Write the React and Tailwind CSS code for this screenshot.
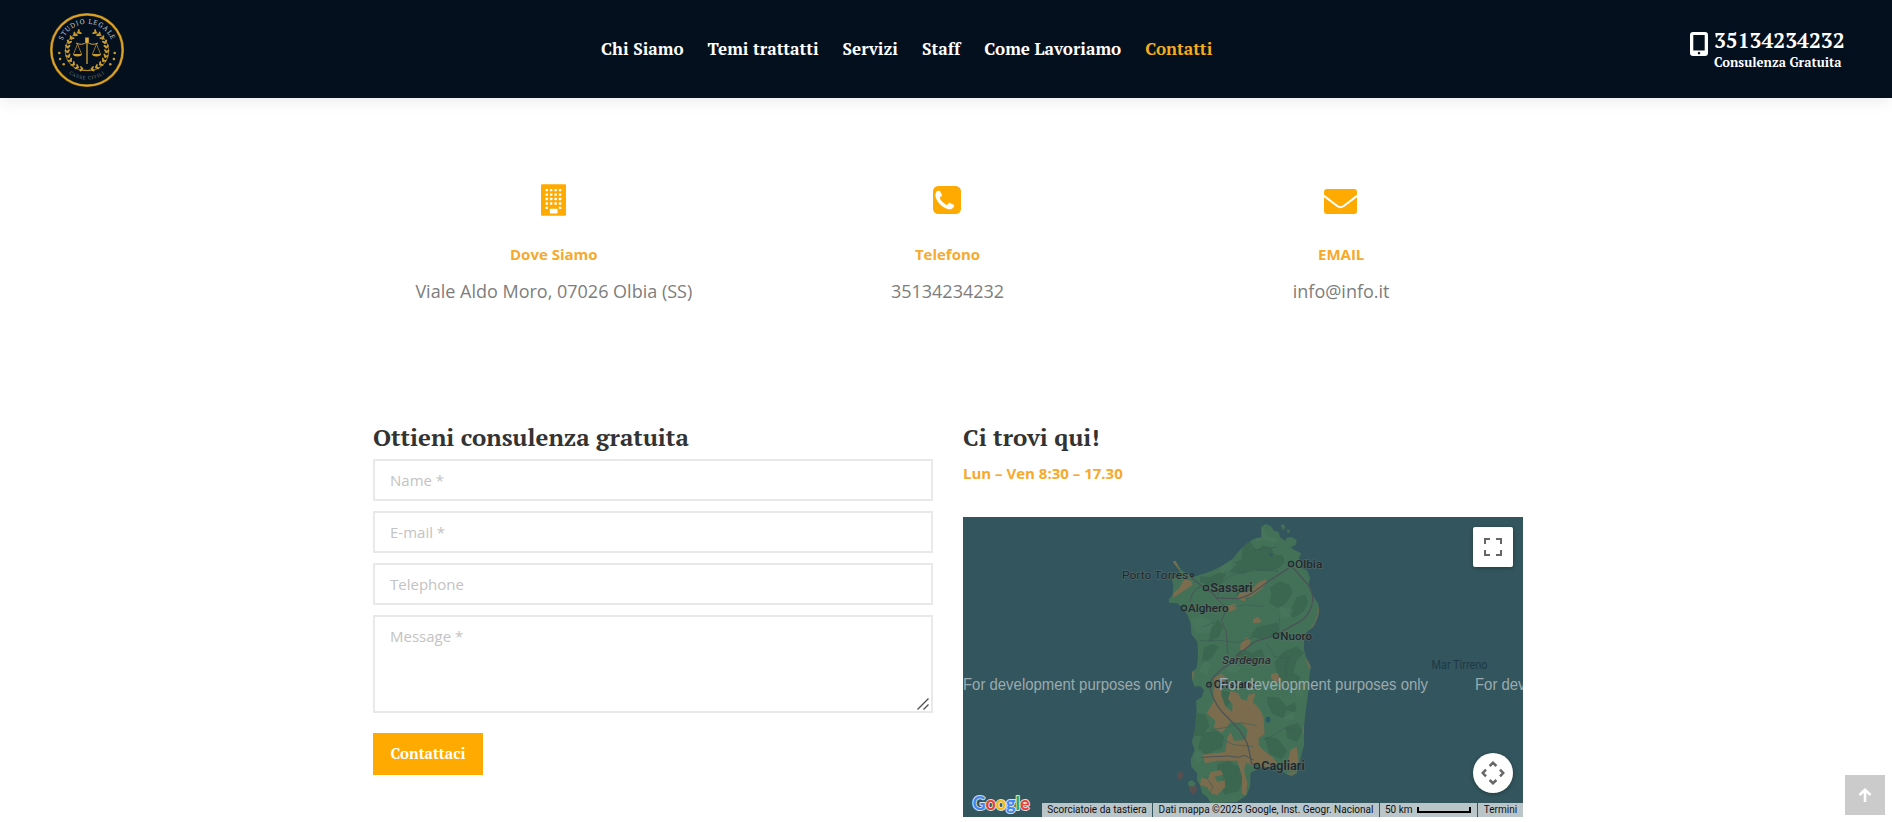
const nav = ['Chi Siamo', 'Temi trattatti', 'Servizi', 'Staff', 'Come Lavoriamo', 'Contatti'];

function Logo() {
  const leaves = Array.from({ length: 11 }, (_, i) => 100 + i * 14);
  return (
    <svg viewBox="-38 -38 76 76" className="h-[76px] w-[76px]">
      <circle r="35.7" fill="none" stroke="#8a6a1d" strokeWidth="2.8" />
      <circle r="35.7" fill="none" stroke="#e0a526" strokeWidth="1.7" />
      <path id="arc-top" d="M-26.300 0A26.300 26.300 0 0 1 26.300 0" fill="none" />
      <path id="arc-low" d="M-29.500 0A29.500 29.500 0 0 0 29.500 0" fill="none" />
      <text fill="#c6ccd0" fontSize="6.800" fontWeight="400" letterSpacing=".9" fontFamily="PT Serif, serif">
        <textPath href="#arc-top" startOffset="50%" textAnchor="middle">STUDIO LEGALE</textPath>
      </text>
      <text fill="#7b848c" fontSize="4.600" fontWeight="400" letterSpacing=".8" fontFamily="PT Serif, serif">
        <textPath href="#arc-low" startOffset="50%" textAnchor="middle">CAUSE CIVILI</textPath>
      </text>
      {[1, -1].map((s) => (
        <g key={s} transform={`scale(${s} 1)`} fill="#c99a2c">
          <path d="M3 20A19.5 19.5 0 0 1 -7 -18" fill="none" stroke="#c99a2c" strokeWidth=".8" />
          {leaves.map((a) => {
            const r = (a * Math.PI) / 180;
            return (
              <g key={a} transform={`translate(${Math.cos(r) * 19.5} ${Math.sin(r) * 19.5}) rotate(${a})`}>
                <ellipse cx="2" cy="1" rx="2.4" ry="1" transform="rotate(42)" />
                <ellipse cx="-2" cy="1" rx="2.4" ry="1" transform="rotate(-42)" />
              </g>
            );
          })}
          <circle cx="-27.7" cy="3" r="1.3" />
          <circle cx="-26.9" cy="9" r="1.3" />
          <circle cx="-23.3" cy="14.3" r="1.3" />
          <path d="M0 -8Q-5 -4 -11 -7" fill="none" stroke="#d6a636" strokeWidth="1" />
          <path d="M-9.5 -6L-13.5 4M-9.5 -6L-5.5 4" fill="none" stroke="#c99a2c" strokeWidth=".7" />
          <path d="M-14 4h9a4.5 2.4 0 0 1-9 0z" />
        </g>
      ))}
      <path d="M-1.8-12.5h3.6v5h-3.6zM-.6-8h1.2V14h-1.2z" fill="#e0ae3a" />
    </svg>
  );
}

function Building() {
  const wins = [];
  for (let r = 0; r < 5; r++)
    for (let c = 0; c < 4; c++)
      if (r < 4 || c === 0 || c === 3) wins.push([4.6 + c * 4.5, 4.8 + r * 4.5]);
  return (
    <svg viewBox="0 0 25.4 32" className="h-8 w-[25px]">
      <rect width="25.4" height="32" rx="1" fill="#ffaa00" />
      {wins.map(([x, y]) => (
        <rect key={`${x}-${y}`} x={x} y={y} width="2.5" height="2.4" rx=".4" fill="#fff" />
      ))}
      <rect x="9" y="25" width="7.8" height="4.6" rx=".5" fill="#fff" />
    </svg>
  );
}

function PhoneSquare() {
  return (
    <svg viewBox="128 128 1536 1536" className="h-7 w-7" fill="#ffaa00">
      <path d="M1280 1193q0-11-2-16-3-8-38.5-29.5t-88.5-49.5l-53-29q-5-3-19-13t-25-15-21-5q-18 0-47 32.5t-57 65.5-44 33q-7 0-16.5-3.5t-15.5-6.5-17-9.5-14-8.5q-99-55-170.5-126.5t-126.5-170.5q-2-3-8.5-14t-9.5-17-6.5-15.5-3.5-16.5q0-13 20.5-33.5t45-38.5 45-39.5 20.5-36.5q0-10-5-21t-15-25-13-19q-3-6-15-28.5t-25-45.5-26.5-47.5-25-40.5-16.5-18-16-2q-48 0-101 22-46 21-80 94.5t-34 130.5q0 16 2.500 34t5 30.500 9 33 10 29.500 12.500 33 11 30q60 164 216.500 320.500t320.500 216.500q6 2 30 11t33 12.500 29.500 10 33 9 30.500 5 34 2.500q57 0 130.500-34t94.500-80q22-53 22-101zm384-777v960q0 119-84.500 203.500t-203.500 84.500h-960q-119 0-203.500-84.500t-84.500-203.500v-960q0-119 84.500-203.500t203.500-84.500h960q119 0 203.500 84.500t84.500 203.500z" />
    </svg>
  );
}

function Envelope() {
  return (
    <svg viewBox="0 0 33 25" className="mt-[2px] mr-px h-[25px] w-[33px]" fill="#ffaa00">
      <path d="M3 0h27q3 0 3 3v2.600l-14.200 11q-2.300 1.500-4.600 0L0 5.600V3q0-3 3-3z" />
      <path d="M0 8.200l13 9.900q3.500 2.300 7 0L33 8.200V22q0 3-3 3H3q-3 0-3-3z" />
    </svg>
  );
}

function Info({ icon, title, children }) {
  return (
    <div className="flex flex-col items-center">
      <div className="flex h-8 items-center justify-center">{icon}</div>
      <h3 className="mt-[27px] text-[15px] leading-[22px] font-bold text-[#f7a92d]">{title}</h3>
      <p className="mt-[12px] text-[18px] leading-[28px] text-[#7d7d7d]">{children}</p>
    </div>
  );
}

const labels = [
  ['Olbia', 585, 173, 82, 34, 500],
  ['Porto Torres', 66, 206, 199, 33, 400],
  ['Sassari', 331, 246, 127, 36, 600],
  ['Alghero', 264, 305, 122, 34, 500],
  ['Nuoro', 541, 389, 95, 34, 500],
  ['Oristano', 341, 535, 128, 34, 600],
  ['Cagliari', 484, 780, 130, 36, 600],
];
const dots = [[573, 162, 8], [276, 196, 4.5], [318, 234, 8], [252, 294, 8], [528, 377, 8], [327, 524, 7], [471, 768, 8]];

function SardiniaMap() {
  return (
    <svg viewBox="0 0 560 300" className="block h-[300px] w-[560px] bg-[#33555d]" fontFamily="Roboto, sans-serif">
      <defs>
        <clipPath id="coast">
          <path d="M484 50L496 42 512 48 522 62 536 66 540 82 556 92 560 84 574 80 590 90 588 104 572 112 584 120 604 130 596 146 610 158 600 170 622 182 630 204 626 222 634 250 654 280 658 302 652 326 640 350 618 368 612 390 612 420 620 446 632 468 628 500 626 540 618 596 612 650 612 706 598 760 590 790 574 798 552 788 530 776 500 770 476 776 452 788 450 830 440 856 410 876 332 880 322 862 306 850 300 826 290 810 292 790 274 770 272 748 284 720 276 696 286 650 290 600 288 572 306 560 312 540 300 528 284 530 276 510 276 486 290 474 294 440 292 396 274 372 272 340 262 314 250 296 232 280 206 278 206 268 218 254 220 226 216 206 232 200 240 210 238 180 218 156 226 152 244 180 262 192 282 200 308 192 336 182 366 168 398 146 416 124 436 104 462 86 484 82z" />
        </clipPath>
      </defs>
      <g transform="translate(137 -7) scale(.33333)">
        <g clipPath="url(#coast)">
          <path fill="#437158" d="M190 30h480v860H190z" />
          <path fill="#3b664f" d="M428 112l22-16 20 24 20-14 24 8 10 20 24 2 6 22-24 20-32 6-40-4-30 12-38-6 8-28 26-8zM300 200l32 0 26-12 20 4-14 28-22 14-14-8-28-10zM410 242l26-8 20 10-12 24-34-4zM510 232l30-18 30 12 8 24-24 34-22 10-24-16 6-26zM590 262l26-8 8 22-14 30-30 18-14-14zM354 328l16 24-14 30-30 14 8-40zM470 352l60-14 10 22-30 24-30 4-28-10zM312 412l28-10 16 8-22 34-30 20zM404 434l30-16 20 10 32-12 8 28-42 18-32-6zM552 424l38-14 22 18-22 24-10 36 22 14-12 30-34 6-24-38-8-44zM362 542l26 4 8 24-18 22-14-20zM500 560l36 2 24 28 24-14 6 26-42 22-30-12-14-28zM292 610l24 4 12 34-20 28-30 4 4-38zM306 670l42-8 24 18-6 34-50 20-22-20zM352 762l34-10 32 20 12 36-14 36-42 10-14-26 12-26-20-18zM494 680l40 6 28 38-18 24-38-18zM556 650l38-12 14 24-16 34-30-12z" />
          <path fill="#4a785d" opacity=".6" d="M470 60l20-6 10 22 34 12-8 12-34-10-24 8zM360 160l28-10 24 12-18 18-32 8zM270 330l34-10 34 16-10 30-38 6zM540 290l40 8-10 22-36 8zM390 460l34 12-14 18-34-8zM520 500l28 10 6 24-24-4zM310 450l22 12-10 34-24-12zM590 520l20 4-2 40-20-8zM560 600l24 8-4 24-30-6zM290 720l24 18-16 20-18-16z" />
          <g fill="#7b6c4e">
            <path d="M214 150l12-2 14 34-8 6zM252 208l22 4 4 12-38 26-20 14-2-12 22-20zM418 250l36-10 20-22 22-10 6 8-16 20-30 22-18 6-4 10-24-8zM386 286l22-4 2 14-22 10-10-8zM458 328l16-8 12 16-26 4zM422 402l16-20 14 8-6 22-18 12-8-8zM514 492l18-4 10 22-12 8-18-14z" />
            <path d="M342 504L364 492 378 502 364 526 364 556 376 588 396 606 398 584 384 566 392 542 414 550 422 566 440 572 446 554 466 550 458 576 478 596 490 620 494 672 476 684 476 706 490 720 520 744 532 760 500 772 460 768 438 758 432 780 442 820 438 856 426 852 426 800 412 752 350 752 316 760 306 734 376 726 382 682 392 666 402 692 438 690 442 658 424 640 392 636 366 668 342 654 346 632 320 610 340 576z" />
            <path d="M332 786l30-6 8 14-26 6 8 16 22-6 2 20-24 26-20-6-10-18-22-8 4-20 20 2zM572 720l18-10 6 44-16 30-24-6z" />
            <path d="M656 290l14 8-22 44-14 24-6-6 16-24zM614 440l20 22 2 26-8-8zM546 792l46-8-2 20-30 0zM608 650l10-8-2 34-8-4zM270 480l14 6-2 18-12 6z" opacity=".6" />
          </g>
        </g>
        <path fill="#594f50" d="M232 790l14-6 4 12-10 16-8-8zM268 828l18-4 6 12-10 20-14-12z" />
        <path fill="#2d5865" d="M498 622l12-2 2 12-8 6-8-4zM508 128l10 4-2 8-8-4z" />
        <path fill="#437158" d="M542 46l10-4 4 12-8 6zM264 816l12-6 12 12-10 8-12-2zM560 60l8-2 2 8-6 4z" />
        <g fill="none" stroke="#4b5357" strokeWidth="4" strokeLinecap="round" strokeLinejoin="round">
          <path d="M270 196l10 12 30 24 24 14 16 18 66 2q30-8 48-22l50-36 50-32" />
          <path d="M580 174l44 50q16 22 14 50-8 50-56 70l-60 34-56 16-48 36-24 30q-30 14-48 36-22 20-14 46 14 48 50 80 44 40 60 80 10 34 12 58l22 10" />
          <path d="M344 260l24 22 10 18-14 34 14 28 4 50 2 20" strokeWidth="3" />
          <path d="M304 742l80-4 30 4 20-6 26 14" strokeWidth="3" />
          <path d="M270 274q6-34 30-44" strokeWidth="3" />
        </g>
        <path fill="none" stroke="#3d5a54" strokeWidth="1.800" strokeLinejoin="round" d="M300 392l70 0 40 6 50-16M368 214l30-20 30-8 60-6 46 4M330 208l20 26 6 24M400 290l40-6 50 6M310 350l34-14M566 440l-10 36 6 60 40-8M330 660l50-8 40-14 50 8M370 690l30 14 60 6M490 690l30-14 34-22 30 10M318 800l20 30-8 20M460 120l70-8M540 310l-4 40M500 400l24 40 44 4M388 452l60-10 50 20" />
        <g fill="#3f6456" stroke="#252b2e" strokeWidth="3.500">
          {dots.map(([x, y, r]) => <circle key={y} cx={x} cy={y} r={r} />)}
        </g>
        {labels.map(([t, x, y, w, size, weight]) => (
          <text key={t} x={x} y={y} fontSize={size} fontWeight={weight} textLength={w} lengthAdjust="spacingAndGlyphs" fill="#22282b" stroke="#5d7170" strokeOpacity=".6" strokeWidth="4" paintOrder="stroke">{t}</text>
        ))}
        <text x="366" y="461" fontSize="33" fontWeight="500" fontStyle="italic" textLength="147" lengthAdjust="spacingAndGlyphs" fill="#292e31" stroke="#6d7b77" strokeOpacity=".6" strokeWidth="4" paintOrder="stroke">Sardegna</text>
      </g>
      <text x="468.500" y="152" fontSize="12" textLength="56" lengthAdjust="spacingAndGlyphs" fill="#1c3a45">Mar Tirreno</text>
      <g fill="#9baaae" fontFamily="Liberation Sans, sans-serif" fontSize="16">
        {[0, 256, 512].map((x) => (
          <text key={x} x={x} y="173" textLength="209" lengthAdjust="spacingAndGlyphs">For development purposes only</text>
        ))}
      </g>
      <text x="9.500" y="292.500" fontFamily="Lato, sans-serif" fontWeight="700" fontSize="19" textLength="57" lengthAdjust="spacingAndGlyphs" stroke="#d9e2e4" strokeWidth="2" strokeLinejoin="round" paintOrder="stroke">
        <tspan fill="#4285f4">G</tspan><tspan fill="#e94235">o</tspan><tspan fill="#fabb05">o</tspan><tspan fill="#4285f4">g</tspan><tspan fill="#34a853">l</tspan><tspan fill="#e94235">e</tspan>
      </text>
    </svg>
  );
}

const field = 'block w-full border-2 border-[#e9e9e9] bg-white px-[15px] text-[15px] text-[#555] placeholder-[#c3c3c3] outline-none';
const serif = "font-['PT_Serif','Liberation_Serif',serif] font-bold";

export default function App() {
  return (
    <div className="h-[822px] overflow-hidden bg-white font-['Open_Sans',sans-serif]">
      <header className={`flex h-[98px] items-center justify-between bg-[#04101d] pr-[46px] pl-[49px] text-white shadow-[0_2px_16px_rgba(0,0,0,0.09)] ${serif}`}>
        <div className="w-[552px] pt-[2px]"><Logo /></div>
        <nav className="flex flex-1 gap-6 pb-px text-[17px] leading-6 whitespace-nowrap">
          {nav.map((n) => (
            <a key={n} className={n === 'Contatti' ? 'text-[#f5ab1c]' : ''}>{n}</a>
          ))}
        </nav>
        <div className="flex w-[156px] gap-[6px] pt-px whitespace-nowrap">
          <svg viewBox="0 0 18 24" className="mt-[4px] h-6 w-[18px] shrink-0">
            <path fillRule="evenodd" fill="#fff" d="M3 0h12q3 0 3 3v18q0 3-3 3H3q-3 0-3-3V3q0-3 3-3zM3.300 3v15.500h11.400V3zM9 19.800a1.300 1.300 0 1 0 .01 0z" />
          </svg>
          <div>
            <div className="text-[21px] leading-6">35134234232</div>
            <div className="text-[13px] leading-5">Consulenza Gratuita</div>
          </div>
        </div>
      </header>

      <main className="mx-auto w-[1180px] pl-[17px]">
        <section className="-mr-[2px] -ml-[16px] grid grid-cols-3 pt-[86px]">
          <Info icon={<Building />} title="Dove Siamo">Viale Aldo Moro, 07026 Olbia (SS)</Info>
          <Info icon={<PhoneSquare />} title="Telefono">35134234232</Info>
          <Info icon={<Envelope />} title="EMAIL">info@info.it</Info>
        </section>

        <section className="mt-[114px] flex gap-[30px]">
          <form className="w-[560px] shrink-0">
            <h2 className={`h-[40px] text-[24px] leading-[36px] text-[#333] ${serif}`}>Ottieni consulenza gratuita</h2>
            <div className="flex flex-col gap-[10px]">
              <input className={`h-[42px] ${field}`} placeholder="Name *" />
              <input className={`h-[42px] ${field}`} placeholder="E-mail *" />
              <input className={`h-[42px] ${field}`} placeholder="Telephone" />
              <div className="relative">
                <textarea className={`h-[98px] resize-none pt-[9px] leading-[20px] ${field}`} placeholder="Message *" />
                <svg viewBox="0 0 12 12" className="absolute right-[4px] bottom-[3px] h-3 w-3" stroke="#4a4a4a" strokeWidth="1.300"><path d="M.5 11.500L11.500.5M6.500 11.500L11.500 6.500" /></svg>
              </div>
            </div>
            <button type="button" className={`mt-5 h-[42px] w-[110px] bg-[#ffaa00] pb-[2px] text-[15px] text-white ${serif}`}>Contattaci</button>
          </form>
          <div className="w-[560px] shrink-0">
            <h2 className={`text-[24px] leading-[36px] text-[#333] ${serif}`}>Ci trovi qui!</h2>
            <p className="mt-[7px] h-[55px] text-[15px] leading-[22px] font-bold text-[#f7a92d]">Lun – Ven 8:30 – 17.30</p>
            <div className="relative h-[300px] overflow-hidden">
              <SardiniaMap />
              <div className="absolute top-[10px] right-[10px] flex h-10 w-10 items-center justify-center rounded-[2px] bg-white shadow-[0_1px_4px_rgba(0,0,0,0.3)]">
                <svg viewBox="0 0 18 18" className="h-[18px] w-[18px]" fill="#666"><path d="M0 0v6h2V2h4V0zM12 0v2h4v4h2V0zM16 12v4h-4v2h6v-6zM2 12H0v6h6v-2H2z" /></svg>
              </div>
              <div className="absolute right-[10px] bottom-[24px] flex h-10 w-10 items-center justify-center rounded-full bg-white shadow-[0_1px_4px_rgba(0,0,0,0.3)]">
                <svg viewBox="-12 -12 24 24" className="h-6 w-6" fill="none" stroke="#666" strokeWidth="2.500"><path d="M-3.400-7L0-10.200 3.400-7M-3.400 7L0 10.200 3.400 7M-7-3.400L-10.200 0-7 3.400M7-3.400L10.200 0 7 3.400" /></svg>
              </div>
              <div className="absolute right-0 bottom-0 flex h-[14px] gap-px font-[Roboto,sans-serif] text-[10px] leading-[14px] whitespace-nowrap text-[#111]">
                <span className="w-[110px] bg-[#b9c5c8] text-center">Scorciatoie da tastiera</span>
                <span className="w-[226px] bg-[#b9c5c8] text-center">Dati mappa ©2025 Google, Inst. Geogr. Nacional</span>
                <span className="flex w-[97px] items-center gap-1 bg-[#b9c5c8] pl-[5px]">50 km<i className="h-[6px] w-[54px] border-2 border-t-0 border-black" /></span>
                <span className="w-[45px] bg-[#b9c5c8] text-center">Termini</span>
              </div>
            </div>
          </div>
        </section>
      </main>

      <div className="fixed right-[7px] bottom-[7px] flex h-10 w-10 items-center justify-center bg-[#cbcbcb]">
        <svg viewBox="0 0 14 14" className="h-[14px] w-[14px]" fill="none" stroke="#fff" strokeWidth="2.600"><path d="M1.500 7L7 1.800 12.500 7M7 2.500V14" /></svg>
      </div>
    </div>
  );
}
